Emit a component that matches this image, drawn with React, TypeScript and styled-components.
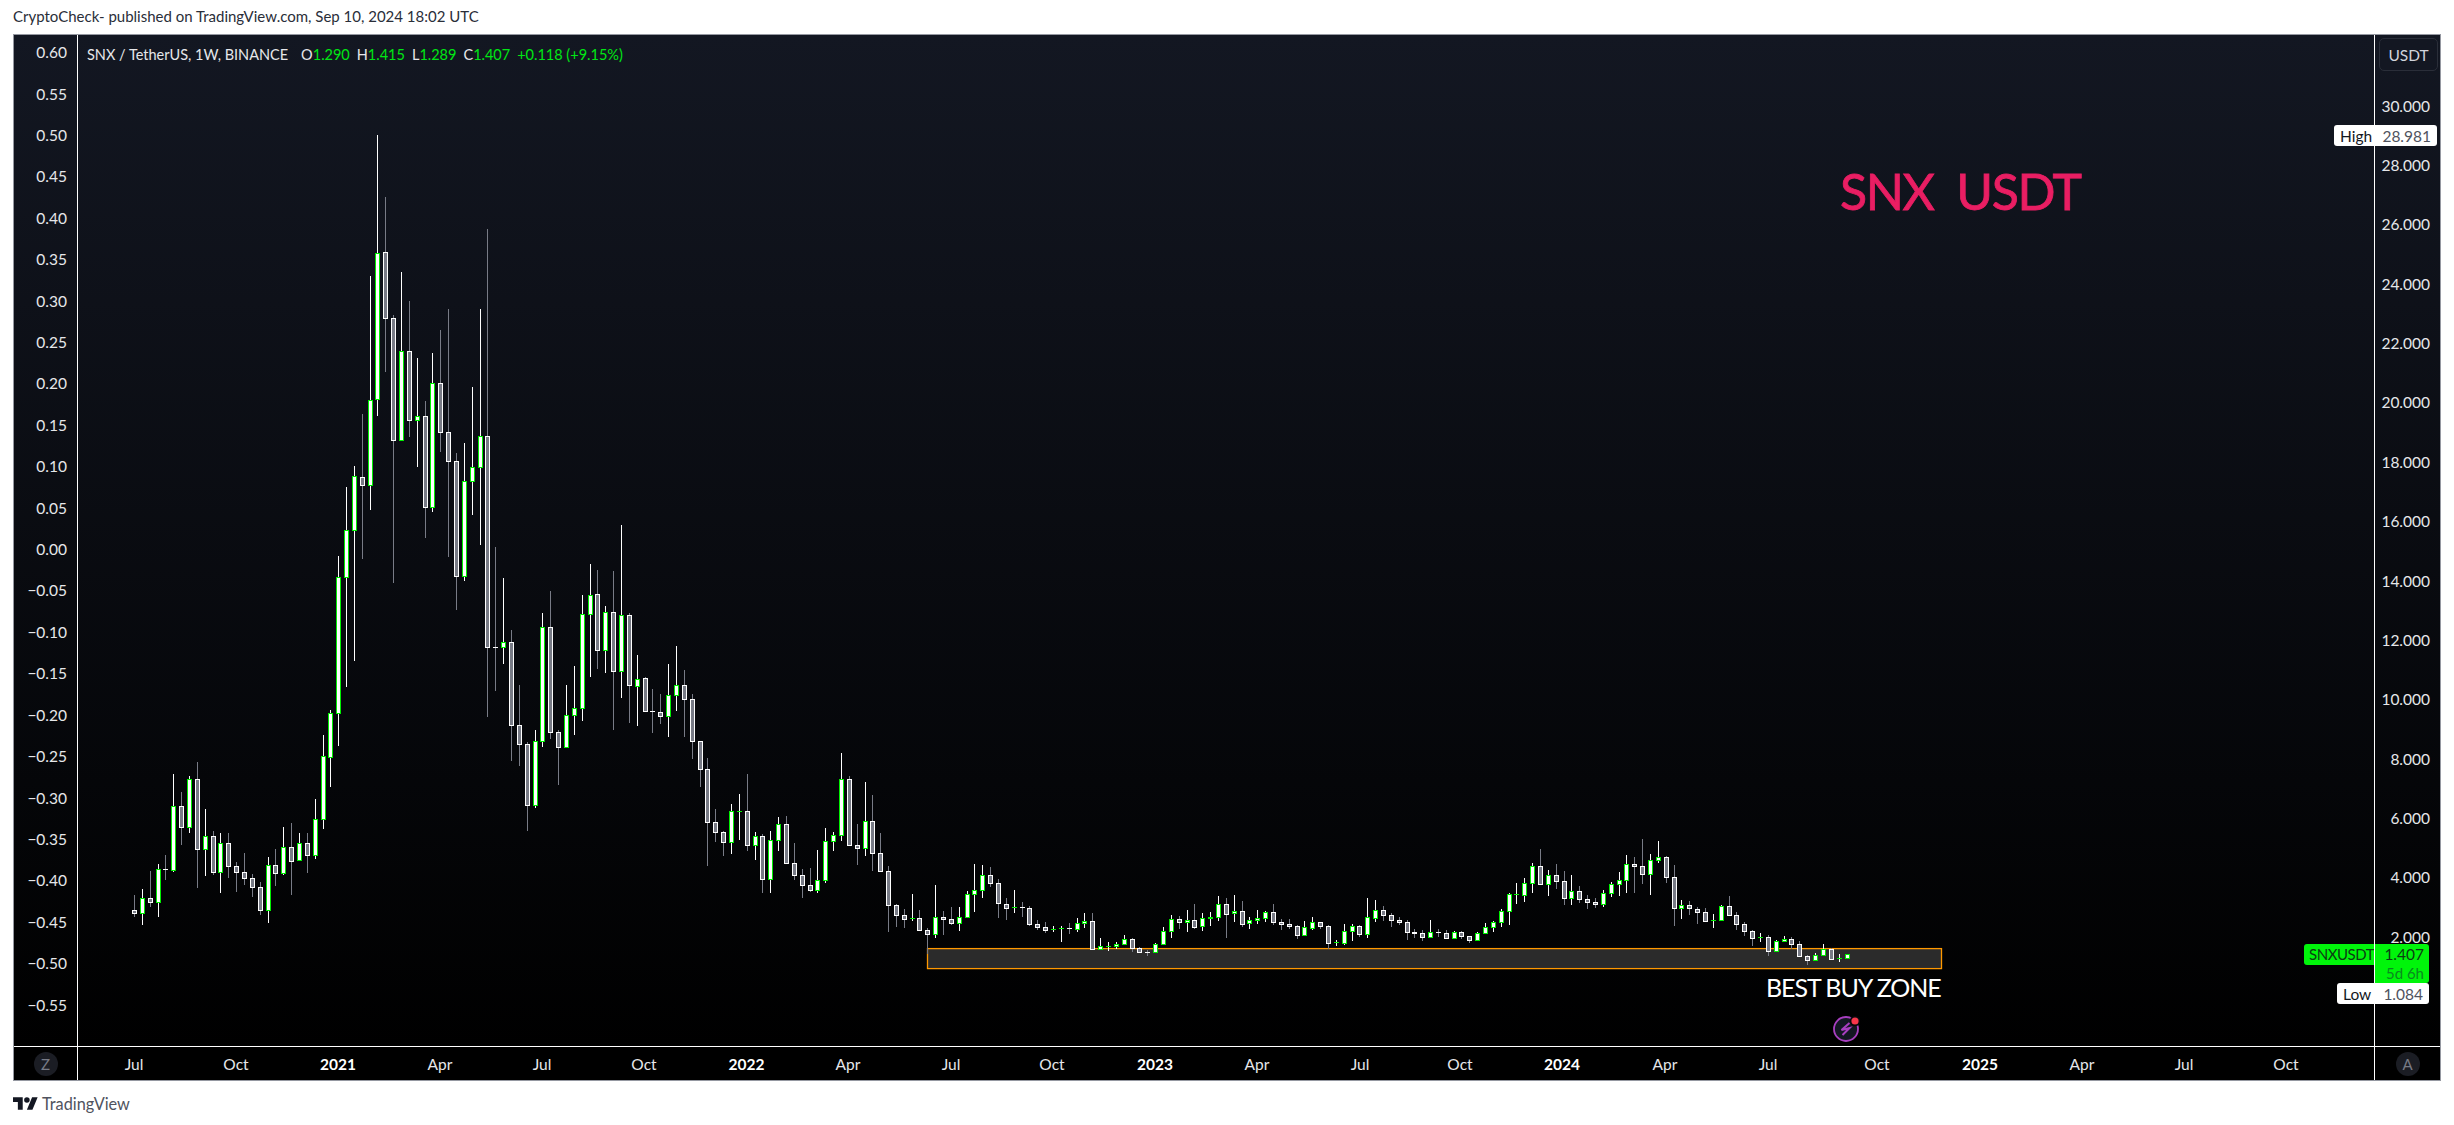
import React from "react";
import styled, { createGlobalStyle } from "styled-components";

const FONT = `"Lato", "Open Sans", sans-serif`;

const Global = createGlobalStyle`
  html, body { margin: 0; padding: 0; background: #fff; }
  body { font-family: ${FONT}; }
`;

type Raw = [number, number, number, number, number, number];
type Set = { ox: number; oy: number; rows: Raw[] };

const z6a: Raw[] = [
  [103,1185,1231,1241,1250,0],[127,1167,1196,1240,1274,1],[151,1113,1195,1208,1220,0],[175,1092,1108,1208,1250,1],
  [196,1065,1108,1108,1139,0],[220,822,919,1112,1115,1],[244,876,919,983,1032,0],[268,828,838,983,998,1],
  [292,786,838,1048,1163,0],[316,927,1009,1048,1127,1],[340,993,1009,1118,1124,0],[361,999,1030,1118,1178,1],
  [385,999,1030,1100,1133,0],[409,1086,1099,1118,1175,0],[433,1059,1117,1136,1154,0],[457,1122,1135,1163,1190,0],
  [481,1146,1162,1232,1244,0],[505,1071,1096,1232,1268,1],[526,1047,1096,1121,1157,0],[550,981,1042,1121,1124,1],
  [574,969,1042,1085,1184,0],[598,999,1030,1082,1082,1],[622,999,1030,1067,1118,0],[646,897,958,1067,1076,1],
  [670,705,769,958,986,1],[691,630,640,772,860,1],[715,168,232,640,737,1],
];
const z5: Raw[] = [
  [739,1102,1231,1373,1700,1],[763,1038,1070,1231,1622,1],[787,882,1072,1096,1316,0],[811,468,842,1096,1168,1],
  [832,45,400,838,887,1],[856,231,397,596,755,0],[880,586,595,962,1388,0],[904,456,694,962,962,1],
  [928,543,694,902,950,0],[952,714,890,902,1040,1],[976,843,889,1162,1253,0],[997,700,790,1162,1175,1],
  [1021,630,790,938,995,0],[1045,567,938,1024,1310,0],[1069,999,1024,1370,1469,0],[1093,969,1085,1370,1382,1],
  [1117,801,1043,1085,1184,1],[1141,567,950,1043,1274,1],[1162,327,950,1583,1790,0],
];
const z6b: Raw[] = [
  [1186,141,442,442,572,0],[1210,234,427,442,491,1],[1234,390,427,677,782,0],[1258,555,676,734,797,0],
  [1282,726,733,917,992,0],[1306,690,724,917,923,1],[1327,339,382,724,740,1],
];
const z7: Raw[] = [
  [91,213,322,637,654,0],[115,630,637,683,792,0],[139,495,586,683,683,1],[163,438,565,586,642,1],[187,225,283,566,600,1],
  [211,132,226,283,468,1],[232,150,223,392,444,0],[256,258,277,392,456,1],[280,153,277,455,627,0],[304,15,286,455,531,1],
  [328,279,286,497,606,0],[352,405,478,500,615,1],[376,471,475,575,575,0],[397,507,574,574,636,0],[421,522,577,590,609,0],
  [445,432,526,590,648,1],[469,378,496,527,570,1],[493,450,496,539,648,0],[517,522,539,665,714,0],[541,664,664,749,798,0],
  [562,714,748,908,1035,0],[586,867,907,938,963,0],[610,933,937,968,1005,0],[634,852,874,968,999,1],[658,822,874,874,957,1],
  [682,762,874,977,990,0],[706,936,949,977,1017,1],[727,942,949,1079,1116,0],[751,933,961,1079,1116,1],[775,891,913,961,990,1],
  [799,888,913,1031,1031,0],[823,969,1030,1067,1077,0],[847,1047,1066,1097,1131,0],[871,1044,1096,1112,1115,0],[892,990,1081,1112,1118,1],
  [916,924,964,1082,1088,1],[940,936,946,964,990,1],[964,699,778,947,960,1],[988,768,778,977,977,0],[1012,912,976,986,1032,0],
  [1036,786,904,986,1005,1],[1057,825,904,1001,1050,0],[1081,939,1000,1055,1055,0],[1105,1038,1054,1157,1233,0],[1129,1152,1156,1187,1218,0],
  [1153,1167,1186,1199,1221,0],[1177,1122,1196,1196,1200,1],[1198,1170,1195,1232,1232,0],[1222,1224,1231,1244,1300,0],[1246,1095,1192,1244,1251,1],
  [1270,1173,1192,1199,1242,0],[1294,1161,1198,1211,1214,0],[1318,1161,1192,1211,1230,1],[1342,1113,1123,1193,1193,1],
];
const z8: Raw[] = [
  [43,192,271,284,335,1],[67,195,226,272,293,1],[91,201,226,251,258,0],[115,237,250,311,353,0],[139,294,313,326,357,0],
  [163,270,322,322,338,1],[187,306,322,322,348,0],[208,319,325,374,377,0],[232,360,373,383,387,0],[256,366,382,392,396,0],
  [280,378,388,388,393,1],[304,378,385,385,423,1],[328,369,385,385,399,0],[352,354,370,389,393,1],[373,339,364,370,381,1],
  [397,339,364,449,449,0],[421,414,439,449,449,1],[445,426,439,439,450,1],[469,426,433,439,444,1],[493,405,418,434,434,1],
  [517,414,418,446,453,0],[538,441,445,458,458,0],[562,450,457,457,465,0],[586,429,433,458,458,1],[610,381,394,434,434,1],
  [634,345,358,395,411,1],[658,348,358,368,384,0],[682,330,361,368,393,1],[703,312,361,381,384,0],[727,339,355,380,390,1],
  [751,336,352,356,375,1],[775,288,313,353,360,1],[799,294,313,342,411,0],[823,285,334,341,363,1],[847,303,334,372,378,0],
  [868,351,361,371,384,1],[892,330,355,362,369,1],[916,333,337,356,363,1],[940,312,337,368,372,0],[964,358,367,374,387,0],
  [988,357,373,380,384,0],[1012,375,379,407,414,0],[1033,363,382,407,407,1],[1057,351,367,384,387,1],[1081,366,367,380,384,0],
  [1105,375,379,431,445,0],[1129,420,427,427,435,1],[1153,372,394,429,432,1],[1177,372,379,395,420,1],[1198,375,379,404,408,0],
  [1222,294,352,404,411,1],[1246,300,331,356,363,1],[1270,318,331,347,360,0],[1294,339,346,362,378,0],[1318,351,361,368,372,0],
  [1342,360,367,398,417,0],
];
const z9: Raw[] = [
  [43,387,397,401,411,0],[67,390,400,413,420,0],[91,360,397,413,413,1],[115,387,397,397,408,0],[139,390,400,416,416,0],
  [163,393,397,416,416,1],[184,393,397,410,414,0],[208,408,409,422,426,0],[232,396,400,422,422,1],[256,369,382,401,401,1],
  [280,363,367,383,393,1],[304,327,334,368,378,1],[328,279,283,335,372,1],[349,249,283,283,309,1],[373,234,250,285,303,1],
  [397,189,199,251,276,1],[421,147,199,254,254,0],[445,210,226,254,285,1],[469,192,226,245,264,0],[493,213,244,296,312,0],
  [514,225,274,296,312,1],[538,258,274,299,306,0],[562,285,298,308,324,0],[586,294,307,314,321,0],[610,270,280,314,318,1],
  [634,246,253,281,288,1],[658,216,241,254,285,1],[679,165,193,242,276,1],[703,171,193,200,276,0],[727,117,199,224,249,0],
  [751,162,181,224,282,1],[775,123,172,182,186,1],[799,168,172,233,246,0],[823,195,232,326,375,0],[844,300,316,326,354,1],
  [868,303,316,326,342,0],[892,321,328,338,369,0],[916,324,337,365,365,0],[940,342,361,361,381,1],[964,315,319,362,362,1],
  [988,288,319,347,347,0],[1009,336,346,374,387,0],[1033,366,373,395,405,0],[1057,390,394,416,435,0],[1081,399,413,413,423,1],
  [1105,405,412,455,465,0],[1129,420,424,455,455,1],[1153,408,418,425,425,1],[1174,411,418,434,444,0],[1198,423,433,470,470,0],
  [1222,465,469,482,492,0],[1246,459,466,482,482,1],[1270,432,448,467,467,1],[1294,444,448,479,479,0],[1318,462,475,475,483,1],
  [1342,462,463,475,475,1],
];

const sets: Set[] = [
  { ox: 100, oy: 500, rows: z6a },
  { ox: 100, oy: 120, rows: z5 },
  { ox: 100, oy: 500, rows: z6b },
  { ox: 520, oy: 520, rows: z7 },
  { ox: 960, oy: 800, rows: z8 },
  { ox: 1400, oy: 800, rows: z9 },
];

const PANE_X = 78;
const PANE_Y = 35;
const PANE_W = 2296;
const PANE_H = 1011;
const UP = "#00f000";
const TAG_GREEN = "#00f50a";
const DOWN_FILL = "#787b86";

const candles = sets.flatMap(({ ox, oy, rows }) =>
  rows.map(([x, wt, bt, bb, wb, up]) => ({
    x: Math.floor(ox + x / 3),
    wt: Math.floor(oy + wt / 3),
    bt: Math.floor(oy + bt / 3),
    bb: Math.floor(oy + bb / 3),
    wb: Math.floor(oy + wb / 3),
    up: up === 1,
  }))
);

const Page = styled.div`
  width: 2454px;
  height: 1125px;
  background: #fff;
  display: flex;
  flex-direction: column;
  overflow: hidden;
`;

const Header = styled.div`
  height: 34px;
  flex: none;
  padding: 0 0 2px 13px;
  display: flex;
  align-items: center;
  font-size: 15px;
  color: #2a2e39;
  box-sizing: border-box;
`;

const Frame = styled.div`
  position: relative;
  flex: none;
  margin-left: 13px;
  width: 2428px;
  height: 1047px;
  box-sizing: border-box;
  border: 1px solid #9598a1;
  background: linear-gradient(180deg, #131722 0%, #000 97%);
  display: grid;
  grid-template-columns: 63px 1fr 66px;
  grid-template-rows: 1011px 1fr;
`;

const LeftAxis = styled.div`
  display: flex;
  flex-direction: column;
  align-items: flex-end;
  gap: 21.42px;
  padding: 7.2px 10px 0 0;
  box-sizing: border-box;
  overflow: hidden;
`;

const AxisLabel = styled.div`
  height: 20px;
  line-height: 20px;
  font-size: 15.5px;
  color: #e6e7ea;
  white-space: nowrap;
`;

const Pane = styled.div`
  position: relative;
  border-left: 1px solid #fff;
  overflow: hidden;
`;

const ChartSvg = styled.svg`
  position: absolute;
  left: 0;
  top: 0;
  display: block;
`;

const Legend = styled.div`
  position: absolute;
  left: 9px;
  top: 9px;
  height: 20px;
  display: flex;
  align-items: center;
  gap: 7px;
  font-size: 14.5px;
  color: #e6e7ea;
  white-space: nowrap;
`;

const LegendTitle = styled.span`
  margin-right: 6px;
`;

const LegendValue = styled.span`
  color: #00e614;
`;

const Watermark = styled.div`
  position: absolute;
  left: 1762px;
  top: 121px;
  font-size: 50px;
  line-height: 70px;
  color: #e91e63;
  white-space: pre;
  letter-spacing: -1.4px;
  -webkit-text-stroke: 0.8px #e91e63;
`;

const ZoneNote = styled.div`
  position: absolute;
  left: 1688px;
  top: 935px;
  font-size: 25px;
  line-height: 34px;
  color: #fff;
  white-space: nowrap;
  letter-spacing: -1.05px;
`;

const RightAxis = styled.div`
  position: relative;
  border-left: 1px solid #fff;
  display: flex;
  flex-direction: column;
  align-items: flex-end;
  padding-right: 10px;
  box-sizing: border-box;
  overflow: hidden;
`;

const UnitButton = styled.div`
  width: 59px;
  height: 33px;
  margin: 3px -8px 24.7px 0;
  flex: none;
  box-sizing: border-box;
  border: 1px solid #2a2e39;
  border-radius: 5px;
  background: #131722;
  display: flex;
  align-items: center;
  justify-content: center;
  font-size: 15.5px;
  color: #d1d4dc;
`;

const PriceList = styled.div`
  display: flex;
  flex-direction: column;
  align-items: flex-end;
  gap: 39.36px;
`;

const TimeCorner = styled.div<{ $divider?: boolean }>`
  display: flex;
  align-items: center;
  justify-content: center;
  background: #000;
  border-top: 1px solid #fff;
  border-left: ${(p) => (p.$divider ? "1px solid #fff" : "none")};
`;

const RoundButton = styled.div`
  width: 24px;
  height: 24px;
  border-radius: 50%;
  background: #1b1d24;
  color: #787b86;
  font-size: 15px;
  display: flex;
  align-items: center;
  justify-content: center;
`;

const TimeAxis = styled.div`
  background: #000;
  border-top: 1px solid #fff;
  border-left: 1px solid #fff;
  display: flex;
  align-items: center;
  padding-left: 56px;
  overflow: hidden;
`;

const Tick = styled.div<{ $w: number }>`
  flex: 0 0 ${(p) => p.$w}px;
  width: ${(p) => p.$w}px;
`;

const TickText = styled.span<{ $year?: boolean }>`
  display: inline-block;
  transform: translateX(-50%);
  font-size: 15.5px;
  font-weight: ${(p) => (p.$year ? 700 : 400)};
  color: ${(p) => (p.$year ? "#fff" : "#e6e7ea")};
`;

const PriceTag = styled.div<{ $top: number; $left: number; $width: number }>`
  position: absolute;
  top: ${(p) => p.$top}px;
  left: ${(p) => p.$left}px;
  width: ${(p) => p.$width}px;
  height: 21px;
  box-sizing: border-box;
  background: #fff;
  border-radius: 3px;
  display: flex;
  align-items: center;
  justify-content: space-between;
  padding: 0 6px;
  font-size: 15.5px;
  color: #131722;
  white-space: nowrap;
`;

const TagValue = styled.span`
  color: #50535e;
`;

const SymbolTag = styled.div`
  position: absolute;
  top: 909px;
  left: 2290px;
  display: flex;
  gap: 1px;
  align-items: flex-start;
  font-size: 15px;
  color: #0d3b14;
  white-space: nowrap;
`;

const SymbolName = styled.div`
  width: 70px;
  height: 21px;
  box-sizing: border-box;
  padding-left: 5px;
  line-height: 21px;
  background: ${TAG_GREEN};
  border-radius: 3px 0 0 3px;
  letter-spacing: -0.45px;
  overflow: hidden;
`;

const SymbolValue = styled.div`
  width: 54px;
  height: 39px;
  box-sizing: border-box;
  padding-right: 5px;
  background: ${TAG_GREEN};
  border-radius: 0 3px 3px 0;
  display: flex;
  flex-direction: column;
  align-items: flex-end;
  line-height: 21px;
  font-size: 15.5px;
`;

const Countdown = styled.span`
  line-height: 16px;
  font-size: 15px;
  color: #0a8a1e;
`;

const Footer = styled.div`
  flex: none;
  height: 44px;
  padding-left: 13px;
  display: flex;
  align-items: center;
  gap: 4px;
  font-size: 16.3px;
  color: #50535e;
`;

const Logo = styled.svg`
  display: block;
  fill: #131722;
`;

const leftLabels = [
  "0.60","0.55","0.50","0.45","0.40","0.35","0.30","0.25","0.20","0.15","0.10","0.05","0.00",
  "−0.05","−0.10","−0.15","−0.20","−0.25","−0.30","−0.35","−0.40","−0.45","−0.50","−0.55",
];
const rightLabels = [
  "30.000","28.000","26.000","24.000","22.000","20.000","18.000","16.000",
  "14.000","12.000","10.000","8.000","6.000","4.000","2.000",
];
const ticks: [string, number, boolean][] = [
  ["Jul",134,false],["Oct",236,false],["2021",338,true],["Apr",440,false],["Jul",542,false],["Oct",644,false],
  ["2022",746.5,true],["Apr",848,false],["Jul",951,false],["Oct",1052,false],["2023",1155,true],["Apr",1257,false],
  ["Jul",1360,false],["Oct",1460,false],["2024",1562,true],["Apr",1665,false],["Jul",1768,false],["Oct",1877,false],
  ["2025",1980,true],["Apr",2082,false],["Jul",2184,false],["Oct",2286,false],
];

function Chart() {
  return (
    <ChartSvg width={PANE_W} height={PANE_H} viewBox={`${PANE_X} ${PANE_Y} ${PANE_W} ${PANE_H}`} shapeRendering="crispEdges">
      <rect x={927.5} y={948.6} width={1014} height={20} fill="#2b2b2b" stroke="#ff9800" strokeWidth={1.3} shapeRendering="geometricPrecision" />
      {candles.map((c, i) => (
        <g key={i}>
          <rect x={c.x} y={c.wt} width={1} height={c.wb - c.wt + 1} fill={c.up ? "#fff" : DOWN_FILL} />
          {c.bb === c.bt ? (
            <rect x={c.x - 2} y={c.bt} width={5} height={1} fill={c.up ? UP : "#fff"} />
          ) : (
            <>
              <rect x={c.x - 2} y={c.bt} width={5} height={c.bb - c.bt + 1} fill={c.up ? UP : "#fff"} />
              {c.bb - c.bt > 1 && (
                <rect x={c.x - 1} y={c.bt + 1} width={3} height={c.bb - c.bt - 1} fill={c.up ? "#fff" : DOWN_FILL} />
              )}
            </>
          )}
        </g>
      ))}
      <g transform="translate(1846 1029)" shapeRendering="geometricPrecision">
        <circle r={12} fill="#131722" stroke="#a83fc0" strokeWidth={1.8} />
        <path d="M3.5 -6 L-4.5 1 L3.5 -1 L-3.5 6" fill="none" stroke="#a83fc0" strokeWidth={2} strokeLinejoin="miter" />
        <circle cx={9} cy={-8} r={5.2} fill="#07080b" />
        <circle cx={9} cy={-8} r={3.6} fill="#f7364a" />
      </g>
    </ChartSvg>
  );
}

export default function App() {
  return (
    <Page>
      <Global />
      <Header>CryptoCheck- published on TradingView.com, Sep 10, 2024 18:02 UTC</Header>
      <Frame>
        <LeftAxis>
          {leftLabels.map((l) => (
            <AxisLabel key={l}>{l}</AxisLabel>
          ))}
        </LeftAxis>
        <Pane>
          <Chart />
          <Legend>
            <LegendTitle>SNX / TetherUS, 1W, BINANCE</LegendTitle>
            <span>O<LegendValue>1.290</LegendValue></span>
            <span>H<LegendValue>1.415</LegendValue></span>
            <span>L<LegendValue>1.289</LegendValue></span>
            <span>C<LegendValue>1.407</LegendValue></span>
            <LegendValue>+0.118 (+9.15%)</LegendValue>
          </Legend>
          <Watermark>{"SNX  USDT"}</Watermark>
          <ZoneNote>BEST BUY ZONE</ZoneNote>
        </Pane>
        <RightAxis>
          <UnitButton>USDT</UnitButton>
          <PriceList>
            {rightLabels.map((l) => (
              <AxisLabel key={l}>{l}</AxisLabel>
            ))}
          </PriceList>
        </RightAxis>
        <TimeCorner>
          <RoundButton>Z</RoundButton>
        </TimeCorner>
        <TimeAxis>
          {ticks.map(([t, c, y], i) => (
            <Tick key={i} $w={i < ticks.length - 1 ? ticks[i + 1][1] - c : 60}>
              <TickText $year={y}>{t}</TickText>
            </Tick>
          ))}
        </TimeAxis>
        <TimeCorner $divider>
          <RoundButton>A</RoundButton>
        </TimeCorner>
        <PriceTag $top={90} $left={2320} $width={103}>
          <span>High</span>
          <TagValue>28.981</TagValue>
        </PriceTag>
        <SymbolTag>
          <SymbolName>SNXUSDT</SymbolName>
          <SymbolValue>
            <span>1.407</span>
            <Countdown>5d 6h</Countdown>
          </SymbolValue>
        </SymbolTag>
        <PriceTag $top={948} $left={2323} $width={92}>
          <span>Low</span>
          <TagValue>1.084</TagValue>
        </PriceTag>
      </Frame>
      <Footer>
        <Logo width="25" height="13" viewBox="0 4 36 18">
          <path d="M14 22H7V11H0V4h14v18zM28 22h-8l7.5-18h8L28 22z" />
          <circle cx="20" cy="8" r="4" />
        </Logo>
        TradingView
      </Footer>
    </Page>
  );
}
